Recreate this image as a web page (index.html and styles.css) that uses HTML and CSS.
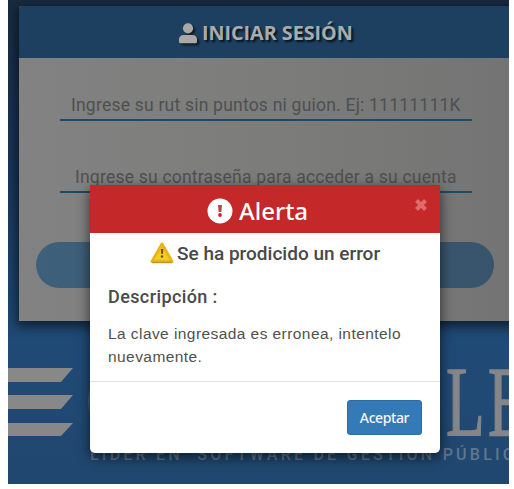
FILE: index.html
```html
<!DOCTYPE html>
<html lang="es">
<head>
<meta charset="utf-8">
<title>Iniciar sesión</title>
<link rel="stylesheet" href="styles.css">
</head>
<body>
<div class="screen">
  <main class="login">
    <header class="login-head">
      <svg class="user" viewBox="0 0 18 21"><circle cx="9" cy="5.3" r="5.1"/><path d="M4.5 12h9a4.500 4 0 0 1 4.500 4v2.800a1.500 1.500 0 0 1-1.500 1.500H1.500A1.500 1.500 0 0 1 0 18.800V16a4.500 4 0 0 1 4.500-4z"/></svg>
      <span class="login-title">INICIAR SESIÓN</span>
    </header>
    <div class="login-body">
      <div class="field"><span>Ingrese su rut sin puntos ni guion. Ej: 11111111K</span></div>
      <div class="field second"><span>Ingrese su contraseña para acceder a su cuenta</span></div>
      <div class="submit"></div>
    </div>
  </main>
  <footer class="brand">
    <svg class="bars" viewBox="0 0 65 70"><path d="M0 0H65L53 14H0zM0 27H65L53 41H0zM0 55H65L53 68H0z"/></svg>
    <div class="emblem"></div>
    <span class="word">LE</span>
    <span class="tagline">LÍDER EN&nbsp; SOFTWARE DE GESTIÓN PÚBLIC</span>
  </footer>
  <section class="modal" role="dialog">
    <header class="modal-head">
      <svg class="alert-icon" viewBox="0 0 26 26"><circle cx="13" cy="13" r="12.500" fill="#fff"/><path d="M11 7h4l-.6 7h-2.800z" fill="#a5533f"/><circle cx="13" cy="17" r="1.900" fill="#c62828"/></svg>
      <span class="modal-title">Alerta</span>
      <svg class="close" viewBox="0 0 14 14"><path d="M2.500 2.500l9 9M11.500 2.500l-9 9"/></svg>
    </header>
    <div class="modal-body">
      <div class="error-line">
        <svg class="warning" viewBox="0 0 24 22"><path d="M12 2L22 19.500H2z" fill="#f6cb25" stroke="#e8b51d" stroke-width="3" stroke-linejoin="round"/><path d="M2 20.500H22" stroke="#bd9426" stroke-width="1.500"/><path d="M10.800 7h2.600l-.6 5h-1.400z" fill="#6d4a14"/><circle cx="12" cy="14.500" r="1.200" fill="#6d4a14"/></svg>
        <span class="error-title">Se ha prodicido un error</span>
      </div>
      <div class="desc"><span>Descripción :</span></div>
      <p class="message">La clave ingresada es erronea, intentelo nuevamente.</p>
    </div>
    <footer class="modal-foot"><button class="accept">Aceptar</button></footer>
  </section>
</div>
</body>
</html>
```
FILE: styles.css
```css
* { box-sizing: border-box; }
body { margin: 0; background: #fff; }
svg { display: block; flex: none; }
span { white-space: nowrap; }
.screen {
  position: relative;
  width: 501px;
  height: 484px;
  margin-left: 8px;
  padding: 6px 0 0 11px;
  overflow: hidden;
  background: linear-gradient(#182b42 0, #1a365b 180px, #204a76 340px, #20476f 484px);
}
.login {
  width: 510px;
  height: 315px;
  border-radius: 3px 0 0 0;
  background: linear-gradient(90deg, #828282, #7c7c7b 50%, #737373);
  box-shadow: 0 3px 12px 2px rgba(0, 0, 0, .6);
}
.login-head {
  height: 52px;
  display: flex;
  padding: 17px 0 0 160px;
  gap: 5px;
  background: #1d4061;
  border-radius: 3px 0 0 0;
  color: #a9abad;
}
.user { width: 18px; height: 21px; fill: #a9a9a8; filter: drop-shadow(2px 2px 1px #101820); }
.login-title {
  font: 700 19.700px/20px "Open Sans", sans-serif;
  text-shadow: 2px 2px 2px #08121c;
}
.login-body { padding: 29px 0 0 41px; }
.field {
  width: 412px;
  height: 34px;
  padding: 8px 0 0 11px;
  border-bottom: 2px solid #1e4a66;
  font: 400 17.500px/20px Roboto, sans-serif;
  letter-spacing: .22px;
  color: #4d5052;
}
.second { margin-top: 38px; padding: 8px 0 0 15px; }
.submit {
  width: 458px;
  height: 46px;
  margin: 49px 0 0 -24px;
  border-radius: 23px;
  background: linear-gradient(90deg, #3e607b, #38546c);
}
.brand {
  display: grid;
  grid-template-columns: 80px 358px 100px;
  grid-template-rows: 78px 30px;
  margin: 47px 0 0 -11px;
  color: #858688;
}
.bars { width: 65px; height: 70px; fill: #888889; }
.emblem { width: 60px; height: 66px; border: 6px solid #4c6178; border-radius: 50%; }
.word {
  justify-self: start;
  margin-top: -4px;
  font: 99px/76px "Liberation Serif", serif;
  letter-spacing: 5px;
  transform: scaleX(.64);
  transform-origin: 0 50%;
  -webkit-text-stroke: 1.500px #858688;
}
.tagline {
  grid-column: 1 / -1;
  padding: 0 0 0 82px;
  font: 500 16px/18px Roboto, sans-serif;
  letter-spacing: 3.230px;
  color: #62768c;
}
.modal {
  position: absolute;
  left: 82px;
  top: 185px;
  width: 350px;
  height: 268px;
  border-radius: 5px;
  background: #fff;
  box-shadow: 0 4px 13px rgba(0, 0, 0, .65);
  color: #494949;
}
.modal-head {
  height: 48px;
  display: flex;
  padding: 13px 12px 0 117px;
  background: #c42828;
}
.alert-icon { width: 26px; height: 26px; }
.modal-title {
  margin-left: 6px;
  font: 500 24px/25px "Noto Sans", sans-serif;
  color: #fff;
}
.close { width: 14px; height: 14px; margin-left: auto; fill: none; stroke: #df6c6c; stroke-width: 4; }
.modal-body { height: 149px; padding: 8px 0 0 18px; border-bottom: 1px solid #e2e2e2; }
.error-line { display: flex; padding-left: 42px; gap: 3px; height: 26px; }
.warning { width: 24px; height: 22px; margin-top: 1px; }
.error-title { font: 500 19px/25px Roboto, sans-serif; }
.desc { padding-top: 17px; font: 500 18px/25px Roboto, sans-serif; letter-spacing: .4px; }
.message {
  width: 312px;
  margin: 13px 0 0;
  font: 15.500px/23px "Liberation Sans", sans-serif;
  letter-spacing: .430px;
  color: #505050;
}
.modal-foot { display: flex; justify-content: flex-end; padding: 18px 18px 0 0; }
.accept {
  width: 75px;
  height: 35px;
  padding: 0;
  border: 1px solid #2e6da4;
  border-radius: 3px;
  background: #337ab7;
  color: #f4f8fc;
  font: 500 14px/20px "Noto Sans", sans-serif;
  letter-spacing: -.4px;
}
```
